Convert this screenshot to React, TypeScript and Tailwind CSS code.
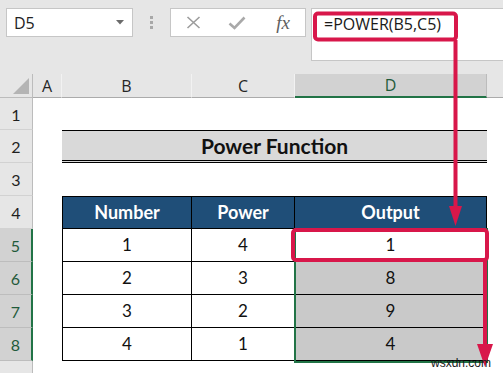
import React from "react";

const data = [
  { n: 1, p: 4, out: 1 },
  { n: 2, p: 3, out: 8 },
  { n: 3, p: 2, out: 9 },
  { n: 4, p: 1, out: 4 },
];

const RowHead = ({ label, selected, tall }: { label?: number; selected?: boolean; tall?: boolean }) => (
  <div
    className={
      (tall ? "h-[33px] " : "h-[32px] ") +
      (selected
        ? "w-[33px] shrink-0 flex items-center justify-center text-[16px] pt-[2px] bg-[#d2d2d2] text-[#1f5a3a] border-b border-b-[#bdbdbd] border-r-2 border-r-[#217346]"
        : "w-[33px] shrink-0 flex items-center justify-center text-[16px] pt-[2px] bg-[#e6e6e6] text-[#1f1f1f] border-b border-b-[#d2d2d2] border-r border-r-[#bcbcbc]")
    }
  >
    {label}
  </div>
);

const Toolbar = () => (
  <div className="h-[74px] bg-[#e6e6e6] flex items-start pt-[8px] pl-[6px]">
    <div className="w-[127px] h-[29px] bg-white border border-[#c6c6c6] flex items-center justify-between pl-[7px] pr-[8px]">
      <span className="text-[16px] text-[#222]">D5</span>
      <svg width="8" height="5" viewBox="0 0 8 5">
        <polygon points="0,0 8,0 4,4.5" fill="#6b6b6b" />
      </svg>
    </div>
    <div className="w-[37px] h-[29px] flex flex-col items-center justify-center gap-[2px]">
      <span className="w-[3px] h-[3px] bg-[#a8a8a8]" />
      <span className="w-[3px] h-[3px] bg-[#a8a8a8]" />
      <span className="w-[3px] h-[3px] bg-[#a8a8a8]" />
    </div>
    <div className="w-[136px] h-[29px] bg-white border border-[#c6c6c6] flex items-center">
      <div className="w-[44px] flex justify-center pl-[1px]">
        <svg width="15" height="13" viewBox="0 0 15 13">
          <path d="M1.5 1 L13.5 12 M13.5 1 L1.5 12" stroke="#9c9c9c" strokeWidth="1.6" fill="none" />
        </svg>
      </div>
      <div className="w-[44px] flex justify-center">
        <svg width="18" height="14" viewBox="0 0 18 14">
          <path d="M1.5 7.5 L6.5 12 L16.5 1.5" stroke="#a9a9a9" strokeWidth="2.6" fill="none" />
        </svg>
      </div>
      <div className="flex-1 flex justify-center pl-[2px] pb-[1px]">
        <span className="text-[19px] italic text-[#5e5e5e] leading-none" style={{ fontFamily: '"Liberation Serif", serif' }}>
          fx
        </span>
      </div>
    </div>
    <div className="ml-[5px] flex-1 h-[53px] bg-white border-y border-l border-[#c6c6c6] pl-[12px] pt-[3px]">
      <span className="text-[16px] text-[#1a1a1a]">=POWER(B5,C5)</span>
    </div>
  </div>
);

const ColHeader = () => (
  <div className="flex h-[24px] bg-[#e6e6e6] text-[16px] text-[#262626]">
    <div className="w-[33px] shrink-0 border-b border-r border-[#bcbcbc] flex items-end justify-end pr-[3px] pb-[3px]">
      <svg width="16" height="16" viewBox="0 0 16 16">
        <polygon points="16,0 16,16 0,16" fill="#b4b4b4" />
      </svg>
    </div>
    <div className="w-[29px] shrink-0 border-b border-b-[#ababab] border-r border-r-[#f2f2f2] flex items-center justify-center">A</div>
    <div className="w-[130px] shrink-0 border-b border-b-[#ababab] border-r border-r-[#f2f2f2] flex items-center justify-center">B</div>
    <div className="w-[103px] shrink-0 border-b border-b-[#ababab] border-r border-r-[#f2f2f2] flex items-center justify-center">C</div>
    <div className="w-[192px] shrink-0 bg-[#d2d2d2] border-b-2 border-b-[#217346] border-r border-r-[#bcbcbc] flex items-center justify-center text-[#1f5a3a]">
      D
    </div>
    <div className="flex-1 border-b border-b-[#ababab]" />
  </div>
);

export default function App() {
  return (
    <div className="relative w-[503px] h-[373px] overflow-hidden bg-white" style={{ fontFamily: '"Open Sans", sans-serif' }}>
      <Toolbar />
      <ColHeader />

      <div className="flex flex-col" style={{ fontFamily: 'Lato, "Open Sans", sans-serif' }}>
        <div className="flex">
          <RowHead label={1} />
        </div>

        <div className="flex">
          <RowHead label={2} tall />
          <div className="w-[29px] shrink-0" />
          <div className="w-[425px] shrink-0 h-[33px] bg-[#d9d9d9] border-t border-black border-b-[3px] border-b-black border-double flex items-center justify-center text-[21px] font-bold text-[#111]">
            Power Function
          </div>
        </div>

        <div className="flex">
          <RowHead label={3} tall />
        </div>

        <div className="flex">
          <RowHead label={4} tall />
          <div className="w-[29px] shrink-0" />
          <div className="w-[130px] shrink-0 h-[33px] bg-[#1f4e78] border border-black flex items-center justify-center text-[18px] font-bold text-white">
            Number
          </div>
          <div className="w-[103px] shrink-0 h-[33px] bg-[#1f4e78] border-y border-r border-black flex items-center justify-center text-[18px] font-bold text-white">
            Power
          </div>
          <div className="w-[192px] shrink-0 h-[33px] bg-[#1f4e78] border-y border-r border-black flex items-center justify-center text-[18px] font-bold text-white">
            Output
          </div>
        </div>

        {data.map((r, i) => (
          <div className="flex" key={r.n}>
            <RowHead label={5 + i} selected tall />
            <div className="w-[29px] shrink-0" />
            <div className="w-[130px] shrink-0 h-[33px] border-x border-b border-black flex items-center justify-center text-[17px] text-[#111]">
              {r.n}
            </div>
            <div className="w-[103px] shrink-0 h-[33px] border-r border-b border-black flex items-center justify-center text-[17px] text-[#111]">
              {r.p}
            </div>
            <div
              className={
                i === 0
                  ? "w-[192px] shrink-0 h-[33px] bg-white border-r border-b border-black flex items-center justify-center text-[17px] text-[#111]"
                  : "w-[192px] shrink-0 h-[33px] bg-[#c9c9c9] border-r border-b border-black flex items-center justify-center text-[17px] text-[#111]"
              }
            >
              {r.out}
            </div>
          </div>
        ))}

        <div className="flex">
          <RowHead tall />
        </div>
      </div>

      {/* selection outline */}
      <div className="absolute left-[294px] top-[228px] w-[194px] h-[135px] border-2 border-[#217346] pointer-events-none" />

      {/* red annotations */}
      <svg className="absolute left-0 top-0 pointer-events-none" width="503" height="373" viewBox="0 0 503 373">
        <rect x="315" y="13.5" width="141" height="26" rx="3" fill="none" stroke="#d8174a" strokeWidth="4" />
        <line x1="455.5" y1="40" x2="455.5" y2="210" stroke="#d8174a" strokeWidth="4" />
        <polygon points="449,206 462,206 455.5,226" fill="#d8174a" />
        <rect x="293" y="230" width="194" height="30" rx="3" fill="none" stroke="#d8174a" strokeWidth="4" />
        <line x1="485" y1="260" x2="485" y2="348" stroke="#d8174a" strokeWidth="4" />
        <polygon points="477,344 493,344 485,367" fill="#d8174a" />
      </svg>

      <div className="absolute left-[430px] top-[357px] text-[12px] leading-none text-[#1a1a1a] px-[1px]" style={{ fontFamily: '"Liberation Sans", sans-serif' }}>
        wsxdn.com
      </div>
    </div>
  );
}
